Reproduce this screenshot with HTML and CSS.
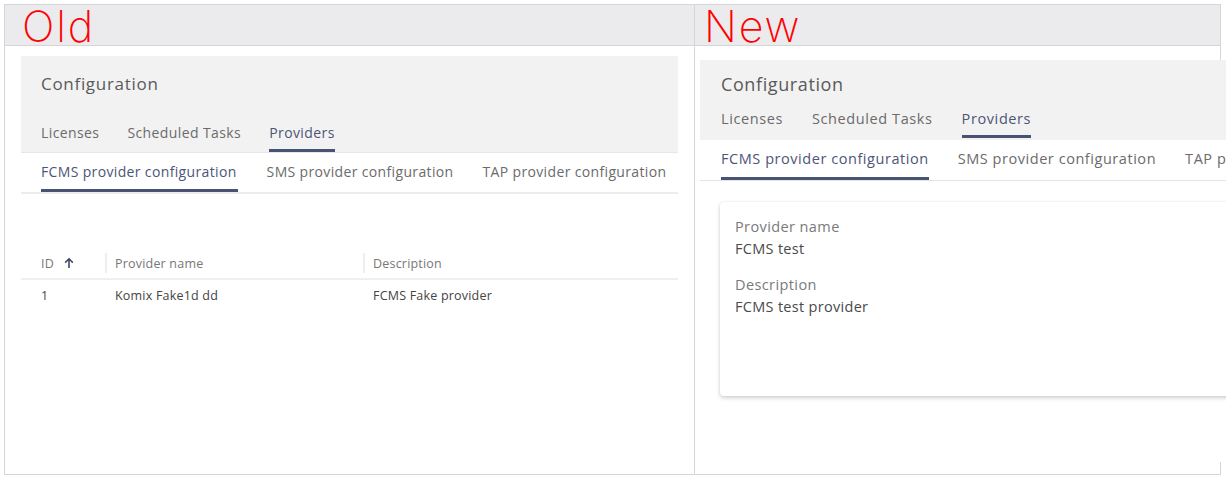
FILE: index.html
```html
<!DOCTYPE html>
<html>
<head>
<meta charset="utf-8">
<link rel="stylesheet" href="styles.css">
</head>
<body>
<div class="frame">
  <div class="head head-left"><span class="caption">Old</span></div>
  <div class="head head-right"><span class="caption">New</span></div>

  <div class="cell cell-left">
    <div class="panel panel-old">
      <div class="top top-old">
        <div class="title">Configuration</div>
        <div class="tabs">
          <span class="tab">Licenses</span>
          <span class="tab">Scheduled Tasks</span>
          <span class="tab active">Providers</span>
        </div>
      </div>
      <div class="subtabs subtabs-old">
        <span class="subtab active">FCMS provider configuration</span>
        <span class="subtab">SMS provider configuration</span>
        <span class="subtab">TAP provider configuration</span>
      </div>
      <div class="grid">
        <div class="grid-head">
          <div class="gcol c-id">ID <svg class="sort" viewBox="0 0 12 12" width="12" height="12"><path d="M6 11V2M2.2 5.6L6 1.8l3.8 3.8" fill="none" stroke="#3f4766" stroke-width="1.6"/></svg></div>
          <div class="gcol c-name sep">Provider name</div>
          <div class="gcol c-desc sep">Description</div>
        </div>
        <div class="grid-row">
          <div class="gcol c-id">1</div>
          <div class="gcol c-name">Komix Fake1d dd</div>
          <div class="gcol c-desc">FCMS Fake provider</div>
        </div>
      </div>
    </div>
  </div>

  <div class="cell cell-right">
    <div class="panel panel-new">
      <div class="top top-new">
        <div class="title">Configuration</div>
        <div class="tabs tabs-new">
          <span class="tab">Licenses</span>
          <span class="tab">Scheduled Tasks</span>
          <span class="tab active">Providers</span>
        </div>
      </div>
      <div class="subtabs subtabs-new">
        <span class="subtab active">FCMS provider configuration</span>
        <span class="subtab">SMS provider configuration</span>
        <span class="subtab">TAP provider configuration</span>
      </div>
      <div class="card">
        <div class="field">
          <div class="label">Provider name</div>
          <div class="value">FCMS test</div>
        </div>
        <div class="field">
          <div class="label">Description</div>
          <div class="value">FCMS test provider</div>
        </div>
      </div>
    </div>
  </div>
</div>
</body>
</html>
```

FILE: styles.css
```css
html, body {
  margin: 0;
  padding: 0;
  background: #ffffff;
  overflow: hidden;
  width: 1226px;
  height: 479px;
}
body {
  font-family: "Open Sans", "Liberation Sans", sans-serif;
  color: #555;
}
.frame {
  margin: 4px 0 0 4px;
  width: 1215px;
  height: 469px;
  border: 1px solid #d6d6d6;
  display: grid;
  grid-template-columns: 690px 525px;
  grid-template-rows: 41px 428px;
}
.head {
  background: #ebebed;
  border-bottom: 1px solid #d6d6d6;
  display: flex;
  align-items: center;
}
.head-left {
  border-right: 1px solid #d6d6d6;
  padding-left: 17px;
}
.head-right {
  padding-left: 9px;
}
.caption {
  color: #ff0000;
  font-family: "Inter", "Open Sans", sans-serif;
  font-size: 43px;
  font-weight: 200;
  line-height: 40px;
  letter-spacing: 1.8px;
  margin-top: 2px;
}
.cell {
  min-width: 0;
}
.cell-left {
  border-right: 1px solid #d6d6d6;
  padding: 10px 0 0 16px;
}
.cell-right {
  padding: 14px 0 0 5px;
}
.panel-old {
  width: 657px;
}
.panel-new {
  width: 540px;
  height: 402px;
  background: #fff;
}
.top {
  background: #f2f2f2;
  padding-left: 20px;
}
.top-old {
  height: 97px;
  border-bottom: 1px solid #e6e6e6;
  box-sizing: border-box;
}
.top-new {
  height: 80px;
  padding-left: 21px;
  box-sizing: border-box;
}
.title {
  font-size: 17px;
  color: #5a5a5a;
  letter-spacing: 0.7px;
}
.top-old .title {
  padding-top: 16px;
  line-height: 24px;
}
.top-new .title {
  padding-top: 12px;
  line-height: 24px;
  font-size: 18px;
  letter-spacing: 0.6px;
}
.tabs {
  display: flex;
  gap: 27px;
  font-size: 14px;
}
.top-old .tabs {
  margin-top: 27px;
  gap: 28px;
}
.tabs-new {
  margin-top: 13px;
  gap: 29px;
  font-size: 14.5px;
}
.tab {
  color: #6b6b6b;
  letter-spacing: 0.4px;
  line-height: 20px;
  padding-bottom: 6px;
  border-bottom: 3px solid transparent;
}
.tabs-new .tab {
  letter-spacing: 0.6px;
  padding-bottom: 6px;
}
.tab.active {
  color: #4d5577;
  border-bottom-color: #4a5274;
}
.subtabs {
  display: flex;
  background: #fff;
  padding-left: 20px;
  font-size: 14px;
  letter-spacing: 0.35px;
}
.subtabs-old {
  height: 39px;
  gap: 29px;
  border-bottom: 2px solid #ececec;
  align-items: flex-end;
}
.subtabs-new {
  height: 40px;
  gap: 29px;
  padding-left: 21px;
  border-bottom: 1px solid #e4e4e4;
  font-size: 14.5px;
  letter-spacing: 0.55px;
  align-items: flex-end;
  overflow: hidden;
  white-space: nowrap;
}
.subtab {
  color: #6b6b6b;
  line-height: 20px;
  padding-bottom: 7px;
  border-bottom: 3px solid transparent;
}
.subtabs-old .subtab.active {
  padding-right: 1px;
}
.subtabs-new .subtab {
  padding-bottom: 8px;
}
.subtab.active {
  color: #4d5577;
  border-bottom-color: #4a5274;
}
.grid {
  margin-top: 54px;
  font-size: 12.5px;
  letter-spacing: 0.2px;
}
.grid-head {
  display: flex;
  height: 30px;
  align-items: center;
  border-bottom: 2px solid #efefef;
  color: #777;
}
.grid-row {
  display: flex;
  height: 30px;
  align-items: center;
  color: #444;
}
.gcol {
  box-sizing: border-box;
  display: flex;
  align-items: center;
  gap: 9px;
}
.c-id {
  width: 84px;
  padding-left: 20px;
}
.c-name {
  width: 258px;
  padding-left: 8px;
}
.grid-row .c-name {
  padding-left: 10px;
}
.c-desc {
  flex: 1;
  padding-left: 8px;
}
.grid-row .c-desc {
  padding-left: 10px;
}
.sep {
  border-left: 2px solid #eeeeee;
  height: 20px;
}
.sort {
  display: block;
}
.card {
  margin: 21px 0 0 20px;
  height: 194px;
  background: #fff;
  border-radius: 4px;
  box-shadow: 0 2px 4px rgba(0,0,0,0.18), 0 0 2px rgba(0,0,0,0.08);
  padding: 14px 15px;
  box-sizing: border-box;
}
.field {
  margin-bottom: 14px;
}
.label {
  color: #7a7a7a;
  font-size: 14.5px;
  line-height: 21px;
  letter-spacing: 0.4px;
}
.value {
  color: #4a4a4a;
  font-size: 14.5px;
  line-height: 23px;
  letter-spacing: 0.3px;
}
```
